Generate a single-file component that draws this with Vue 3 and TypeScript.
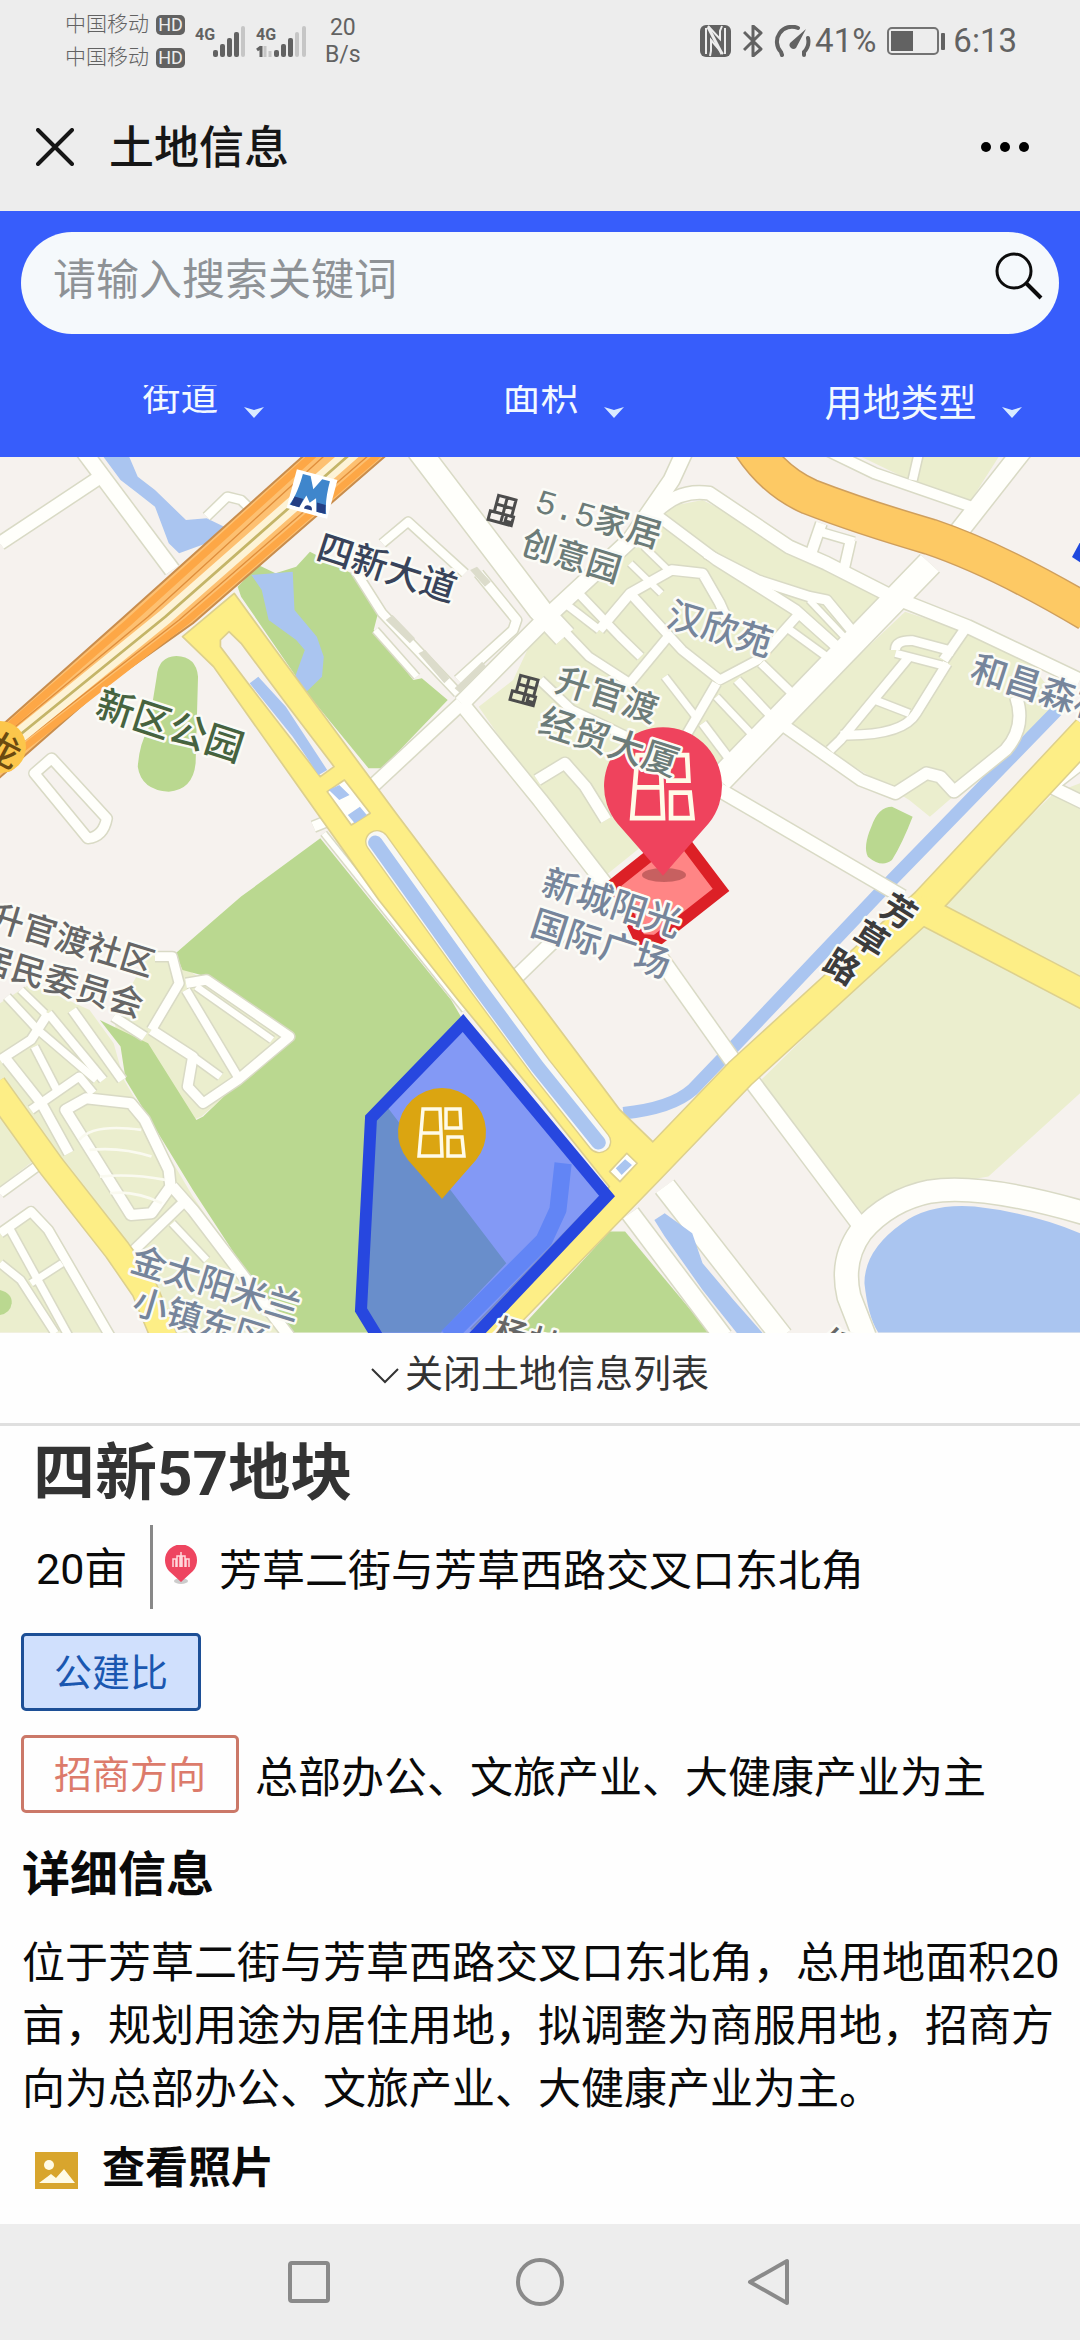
<script setup lang="ts">
import { ref } from 'vue'

interface Filter {
  id: string
  label: string
  clipped: boolean
}

interface Road {
  d: string
  w: number
}

interface MapLabel {
  text: string
  x: number
  y: number
  size: number
  angle: number
  kind: string
}

const keyword = ref('')
const listOpen = ref(true)

const carriers = ['中国移动', '中国移动']

const filters: Filter[] = [
  { id: 'street', label: '街道', clipped: true },
  { id: 'area', label: '面积', clipped: true },
  { id: 'usage', label: '用地类型', clipped: false },
]

const blocks: string[] = [
  'M1390 770L1490 690L1568 520L1690 430L1830 280L1940 170L2040 150L2300 290L2560 440L2480 540L1850 1200L1760 1275L1568 1020L1530 980Z',
  'M2628 485L2850 560L2990 640L3080 760L2700 1100L2640 1050L2400 900L2290 815Z',
  'M2500 20L2900 20L2820 150L2660 100Z',
  'M3136 1000L3060 1030L2200 1900L2520 2310L2640 2220L2870 2180L3136 1930Z',
  'M0 1660L90 1600L260 1680L330 1780L360 1890L560 2240L830 2648L470 2648L120 2130L0 1950Z',
  'M440 1500L500 1510L560 1570L850 1760L585 2000L560 2010L430 1790L340 1760L330 1700Z',
  'M0 2330L90 2290L320 2648L0 2648Z',
  'M0 2000L100 2130L0 2210Z',
]

const greens: string[] = [
  'M690 410L750 345L800 370L860 350L900 305L1020 370L1100 480L1085 540L1200 690L1225 685L1300 750L1110 955L1070 955L900 740L700 440Z',
  'M455 680Q460 620 512 618Q570 620 575 680L568 940Q560 1020 490 1025Q410 1020 400 950Q405 880 430 840Z',
  'M930 1165L1310 1650L1344 1710L1120 1965L1470 2440L1280 2648L830 2648L560 2220L365 1890L350 1790L290 1710L350 1740L430 1780L570 2010L590 2000L690 1900L850 1770L600 1580L530 1560L510 1510L700 1340Z',
  'M1770 2345L1815 2345L2060 2648L1500 2648Z',
  'M2590 1070L2650 1100Q2620 1180 2590 1230Q2560 1255 2520 1220Q2505 1190 2530 1130Q2550 1070 2590 1070Z',
  'M0 2520Q36 2530 34 2560Q30 2590 0 2595Z',
]

const waters: string[] = [
  'M300 20L375 20L400 80L450 120L540 210L600 205L660 235L600 280L520 310L490 280L450 170L400 130L350 90Z',
  'M730 375L850 365L855 480L920 560L940 620L935 680L880 735L850 700L885 600L860 570L780 510L760 420Z',
  'M3136 2350Q3000 2290 2830 2270Q2700 2260 2620 2320Q2510 2400 2510 2500Q2520 2600 2550 2648L3136 2648Z',
]

const streams: Road[] = [
  { d: 'M3070 780L2590 1290L2140 1780L2010 1920Q1950 1975 1810 1990', w: 38 },
  { d: 'M1635 2140L1620 2280L1580 2370L1300 2660', w: 50 },
]

const minorRoads: Road[] = [
  { d: 'M0 280L285 85', w: 38 },
  { d: 'M240 0L500 360', w: 44 },
  { d: 'M600 200L660 140L700 150L740 190', w: 24 },
  { d: 'M1215 0L1568 480L1640 560', w: 66 },
  { d: 'M1080 1010L1340 760', w: 38 },
  { d: 'M1340 760L1600 490L1830 270L1950 90L1990 0', w: 46 },
  { d: 'M1340 760L1568 1050L1770 1320', w: 42 },
  { d: 'M1030 360L1110 490L1330 730', w: 24 },
  { d: 'M1090 540L1210 680', w: 18 },
  { d: 'M1110 280L1185 215L1350 370', w: 24 },
  { d: 'M1390 370L1500 510L1490 540L1330 690', w: 26 },
  { d: 'M100 970L150 925L310 1105Q300 1160 255 1165Z', w: 28 },
  { d: 'M2970 0L2780 250', w: 54 },
  { d: 'M2090 990L2700 340', w: 72 },
  { d: 'M2090 1020L2620 1340', w: 40 },
  { d: 'M1900 190Q1970 115 2060 130L2290 290L2400 340L2590 440L2810 530L3136 690', w: 38 },
  { d: 'M2400 0L2540 70L2820 170', w: 30 },
  { d: 'M2670 0L2650 90', w: 24 },
  { d: 'M2385 220L2350 325', w: 30 },
  { d: 'M2470 270L2450 360', w: 28 },
  { d: 'M2380 245L2480 275', w: 24 },
  { d: 'M1900 190L2080 330L2310 480L2440 600', w: 30 },
  { d: 'M2050 310L2200 390L2350 440L2400 450L2480 550', w: 28 },
  { d: 'M2350 450L2460 570', w: 18 },
  { d: 'M1830 340L1920 430', w: 18 },
  { d: 'M1870 290L1950 370', w: 18 },
  { d: 'M1740 540L1830 430L1950 360L2040 370L2090 460L2120 530', w: 28 },
  { d: 'M1680 430L1800 560L1860 620', w: 24 },
  { d: 'M1590 490L1710 620L1830 700', w: 24 },
  { d: 'M1640 460L1740 540', w: 22 },
  { d: 'M1820 710L1940 560', w: 26 },
  { d: 'M1830 430L1980 600L2090 690L2200 630L2330 480', w: 26 },
  { d: 'M1990 860L2080 700', w: 26 },
  { d: 'M2040 820L2120 930', w: 24 },
  { d: 'M2080 740L2180 850', w: 20 },
  { d: 'M2140 690L2240 800', w: 24 },
  { d: 'M2210 640L2320 750', w: 24 },
  { d: 'M2280 530L2400 620', w: 22 },
  { d: 'M1930 680L2020 800', w: 20 },
  { d: 'M1568 690L1660 780L1820 860', w: 26 },
  { d: 'M1560 990L1640 940L1700 1010L1760 1110', w: 32 },
  { d: 'M2600 600Q2600 570 2650 572L2770 605', w: 26 },
  { d: 'M2640 620L2540 745L2440 870L2410 900', w: 26 },
  { d: 'M2600 610L2750 650', w: 22 },
  { d: 'M2750 640L2660 790Q2620 860 2440 855', w: 26 },
  { d: 'M2540 750L2640 790', w: 22 },
  { d: 'M2740 630L2800 540', w: 28 },
  { d: 'M2950 740Q2980 830 2920 900L2770 1025L2730 980L2690 970L2600 1030L2500 990L2280 830', w: 34 },
  { d: 'M3150 930L3050 1010L3150 1060', w: 36 },
  { d: 'M1900 1500L2140 1850', w: 46 },
  { d: 'M2180 1890L2500 2330', w: 44 },
  { d: 'M3150 2290Q2850 2200 2700 2225Q2580 2250 2500 2345Q2440 2430 2465 2540L2510 2660', w: 66 },
  { d: 'M1830 2290L2100 2660', w: 52 },
  { d: 'M1930 2210L2270 2660', w: 62 },
  { d: 'M1490 1590L1650 1430', w: 40 },
  { d: 'M910 1130L970 1105', w: 30 },
  { d: 'M940 1150L1350 1680', w: 16 },
  { d: 'M0 1830L90 1770L140 1690', w: 26 },
  { d: 'M20 1640L110 1740L280 1890', w: 22 },
  { d: 'M60 1620L130 1690', w: 20 },
  { d: 'M140 1690L300 1890', w: 24 },
  { d: 'M210 1680L355 1890', w: 26 },
  { d: 'M20 1830L120 1960L200 2110', w: 28 },
  { d: 'M100 1790L170 1930', w: 22 },
  { d: 'M90 1980L230 1880L270 1930', w: 24 },
  { d: 'M190 1980L250 1945L380 1960L420 2010L490 2160L495 2210L440 2290L380 2295Z', w: 30 },
  { d: 'M500 2210L560 2280L840 2660', w: 32 },
  { d: 'M390 2400L540 2250', w: 28 },
  { d: 'M500 2320L600 2430', w: 20 },
  { d: 'M450 1520L500 1520L520 1600L440 1740', w: 26 },
  { d: 'M330 1700L420 1760', w: 26 },
  { d: 'M540 1600L600 1590L840 1760L690 1890L590 1960L545 1910L560 1820L440 1740', w: 28 },
  { d: 'M540 1620L690 1880', w: 24 },
  { d: 'M570 1610L790 1770', w: 20 },
  { d: 'M560 1820L640 1880', w: 22 },
  { d: 'M0 2230L120 2140', w: 26 },
  { d: 'M0 2350L90 2285L140 2340L320 2660', w: 26 },
  { d: 'M30 2340L200 2660', w: 22 },
  { d: 'M90 2500L180 2440', w: 20 },
  { d: 'M0 2440L60 2490L160 2650', w: 22 },
]

const yellowRoads: Road[] = [
  { d: 'M-20 1905L150 2150L340 2400L420 2520L480 2670', w: 72 },
  { d: 'M3160 840L2690 1360L2150 1870L1880 2160L1400 2670', w: 88 },
  { d: 'M2660 1370L3160 1640', w: 80 },
]

const labels: MapLabel[] = [
  { text: '四新大道', x: 388, y: 108, size: 36, angle: 18, kind: 'navy' },
  { text: '新区公园', x: 171, y: 266, size: 38, angle: 18, kind: 'park' },
  { text: '5.5家居', x: 598, y: 64, size: 34, angle: 17, kind: 'office mono' },
  { text: '创意园', x: 572, y: 97, size: 34, angle: 17, kind: 'office' },
  { text: '汉欣苑', x: 721, y: 169, size: 36, angle: 17, kind: 'estate' },
  { text: '升官渡', x: 608, y: 235, size: 35, angle: 18, kind: 'office' },
  { text: '经贸大厦', x: 610, y: 282, size: 36, angle: 18, kind: 'office' },
  { text: '和昌森林', x: 1042, y: 229, size: 36, angle: 18, kind: 'estate' },
  { text: '新城阳光', x: 613, y: 443, size: 36, angle: 18, kind: 'estate' },
  { text: '国际广场', x: 602, y: 484, size: 36, angle: 18, kind: 'estate' },
  { text: '芳', x: 900, y: 453, size: 34, angle: 32, kind: 'road' },
  { text: '草', x: 872, y: 480, size: 34, angle: 32, kind: 'road' },
  { text: '路', x: 843, y: 508, size: 34, angle: 32, kind: 'road' },
  { text: '升官渡社区', x: 73, y: 481, size: 34, angle: 17, kind: 'grey' },
  { text: '居民委员会', x: 62, y: 522, size: 34, angle: 17, kind: 'grey' },
  { text: '金太阳米兰', x: 217, y: 824, size: 35, angle: 17, kind: 'estate' },
  { text: '小镇东区', x: 202, y: 861, size: 35, angle: 17, kind: 'estate' },
  { text: '杨林', x: 528, y: 880, size: 34, angle: 17, kind: 'grey' },
  { text: '红', x: 841, y: 886, size: 34, angle: 17, kind: 'grey' },
  { text: '龙', x: 4, y: 290, size: 36, angle: 28, kind: 'highway' },
]

const parcel = {
  name: '四新57地块',
  area: '20亩',
  address: '芳草二街与芳草西路交叉口东北角',
  direction: '总部办公、文旅产业、大健康产业为主',
  detail:
    '位于芳草二街与芳草西路交叉口东北角，总用地面积20亩，规划用途为居住用地，拟调整为商服用地，招商方向为总部办公、文旅产业、大健康产业为主。',
}
</script>

<template>
  <div class="page">
    <div class="status">
      <div class="carriers">
        <div v-for="(c, i) in carriers" :key="i" class="carrier">
          <span>{{ c }}</span>
          <b class="hd">HD</b>
        </div>
      </div>
      <svg class="signal" width="118" height="36" viewBox="0 0 118 36" aria-hidden="true">
        <g fill="#626262">
          <text x="0" y="17" class="gen">4G</text>
          <rect x="18" y="27" width="5" height="7" rx="2" />
          <rect x="25" y="21" width="5" height="13" rx="2" />
          <rect x="32" y="15" width="5" height="19" rx="2" />
          <rect x="39" y="9" width="5" height="25" rx="2" />
          <rect x="46" y="3" width="4" height="31" rx="2" fill="#c6c6c6" />
          <text x="61" y="17" class="gen">4G</text>
          <path d="M66 23v11M66 24l-4 3" stroke="#626262" stroke-width="3" fill="none" />
          <path d="M70 23v11M75 28v6" stroke="#c6c6c6" stroke-width="3" fill="none" />
          <rect x="79" y="27" width="5" height="7" rx="2" />
          <rect x="86" y="21" width="5" height="13" rx="2" />
          <rect x="93" y="15" width="5" height="19" rx="2" />
          <rect x="100" y="9" width="4" height="25" rx="2" fill="#c6c6c6" />
          <rect x="107" y="3" width="4" height="31" rx="2" fill="#c6c6c6" />
        </g>
      </svg>
      <div class="speed"><span>20</span><span>B/s</span></div>
      <div class="status-right">
        <svg width="32" height="32" viewBox="0 0 32 32" aria-hidden="true">
          <rect width="31" height="32" rx="6" fill="#626262" />
          <path d="M6 3v26M25 3v26" stroke="#ededed" stroke-width="2" />
          <path d="M8 1l12 13V6l2-5M10 31l1-5V15l12 14" fill="none" stroke="#ededed" stroke-width="2" />
          <path d="M8 2l14 27" stroke="#ededed" stroke-width="3" />
        </svg>
        <svg width="20" height="32" viewBox="0 0 20 32" aria-hidden="true">
          <path d="M1 7l17 17-8 7V1l8 7L1 25" fill="none" stroke="#626262" stroke-width="3" stroke-linejoin="round" />
        </svg>
        <svg class="gauge" width="38" height="32" viewBox="0 0 38 32" aria-hidden="true">
          <g fill="none" stroke="#626262" stroke-width="4" stroke-linecap="round">
            <path d="M8 30L7 27A15 15 0 0 1 24 3" />
            <path d="M34 13A15 15 0 0 1 30 27V30" />
          </g>
          <path d="M32 4L22 23a4 4 0 0 1-6-5z" fill="#626262" />
        </svg>
        <span class="num">41%</span>
        <svg class="battery" width="60" height="28" viewBox="0 0 60 28" aria-hidden="true">
          <rect x="1" y="1" width="50" height="26" rx="4" fill="none" stroke="#737373" stroke-width="2" />
          <rect x="4" y="4" width="22" height="20" fill="#626262" />
          <rect x="54" y="6" width="4" height="17" rx="1" fill="#626262" />
        </svg>
        <span class="num">6:13</span>
      </div>
    </div>

    <header class="titlebar">
      <button type="button" class="icon-btn" aria-label="关闭">
        <svg width="38" height="38" viewBox="0 0 38 38">
          <path d="M2 2l34 34M36 2L2 36" stroke="#161616" stroke-width="4" stroke-linecap="round" />
        </svg>
      </button>
      <h1>土地信息</h1>
      <button type="button" class="icon-btn more" aria-label="更多">
        <svg width="50" height="12" viewBox="0 0 50 12">
          <circle cx="6" cy="6" r="5" />
          <circle cx="25" cy="6" r="5" />
          <circle cx="44" cy="6" r="5" />
        </svg>
      </button>
    </header>

    <section class="search-area">
      <form class="search" role="search" @submit.prevent>
        <input v-model="keyword" type="text" placeholder="请输入搜索关键词" aria-label="搜索关键词" />
        <button type="submit" class="icon-btn find" aria-label="搜索">
          <svg width="48" height="48" viewBox="0 0 48 48" fill="none" stroke="#0c0c0c" stroke-width="3">
            <circle cx="19" cy="19" r="17" />
            <path d="M31 31l15 15" stroke-width="4" />
          </svg>
        </button>
      </form>
      <div class="filters">
        <div v-for="f in filters" :key="f.id" class="filter">
          <div class="select-box" :class="{ clipped: f.clipped }">
            <select :id="f.id" :aria-label="f.label">
              <option>{{ f.label }}</option>
            </select>
          </div>
          <svg class="arrow" width="20" height="11" viewBox="0 0 20 11" aria-hidden="true">
            <path d="M0 0l10 3L20 0 10 11z" fill="#d9ebff" />
          </svg>
        </div>
      </div>
    </section>

    <svg class="map" viewBox="0 0 1080 876" role="img" aria-label="地图">
      <defs>
        <g id="pin-shape">
          <path d="M0 67Q-5 61-34 28A44 44 0 1 1 34 28Q5 61 0 67Z" />
          <g fill="none" stroke="#fffbe8" stroke-width="3.5">
            <path d="M-19-23H-2L0 24H-23ZM-21 1H-1" />
            <path d="M4-23H18L19-4H4ZM6 5H20L22 24H6Z" />
          </g>
        </g>
        <g id="tower">
          <path d="M-8-13H10V4H12V13H-12V4H-8ZM-8-4H10M-8 4H10M1-13V13M5 4V10H12" />
        </g>
      </defs>

      <rect width="1080" height="876" fill="#f6f2ee" />
      <g transform="translate(0 -7) scale(.3444 .3333)" stroke-linejoin="round">
        <path v-for="(d, i) in blocks" :key="'b' + i" :d="d" fill="#ebeece" />
        <path v-for="(d, i) in greens" :key="'g' + i" :d="d" fill="#bad890" />
        <path v-for="(d, i) in waters" :key="'w' + i" :d="d" fill="#aac5f0" />
        <path v-for="(s, i) in streams" :key="'s' + i" :d="s.d" :stroke-width="s.w" fill="none" stroke="#aac5f0" />

        <g fill="none" stroke="#d9dac5">
          <path v-for="(r, i) in minorRoads" :key="'mc' + i" :d="r.d" :stroke-width="r.w + 9" />
        </g>
        <g fill="none" stroke="#fffffb">
          <path v-for="(r, i) in minorRoads" :key="'m' + i" :d="r.d" :stroke-width="r.w" />
        </g>
        <g fill="none" stroke="#fafaf0" stroke-width="8">
          <path d="M230 2070Q270 2020 410 2040M260 2100Q350 2090 440 2120M290 2180Q380 2170 480 2190M320 2230Q390 2220 470 2260" />
        </g>
        <path d="M1900 2310L1930 2290L2010 2350L2040 2440L2130 2550L2215 2650L2140 2650L2040 2520L1930 2360Z" fill="#aac5f0" />
        <path d="M1120 510L1140 495L1205 565L1190 580ZM1215 610L1235 600L1305 685L1290 700ZM1365 360L1385 350L1425 395L1408 410ZM1320 715L1400 635L1412 650L1335 728Z" fill="#dcdccb" />

        <g fill="none" stroke="#ddd08d">
          <path v-for="(r, i) in yellowRoads" :key="'yc' + i" :d="r.d" :stroke-width="r.w + 9" />
        </g>
        <path
          d="M530 560L680 430L800 600L1150 1090L1340 1350L1568 1660L1800 1980L1910 2090L1800 2250L1568 1950L1330 1650L1100 1350L880 1030L620 650Z"
          fill="#fdee86" stroke="#ddd08d" stroke-width="5"
        />
        <g fill="none" stroke="#fdee86">
          <path v-for="(r, i) in yellowRoads" :key="'y' + i" :d="r.d" :stroke-width="r.w" />
        </g>
        <g stroke="#ddcf8e" stroke-width="5">
          <path d="M640 570L665 545L700 580L830 760L970 950L930 980L720 700L640 590Z" fill="#f6f2ee" />
          <path d="M950 1025L1000 990L1075 1090L1020 1125Z" fill="#fffffb" />
          <path d="M1770 2165L1820 2110L1850 2140L1800 2195Z" fill="#fffffb" />
        </g>
        <path d="M1095 1175L1390 1600L1568 1850L1740 2075" fill="none" stroke="#ddcf8e" stroke-width="70" stroke-linecap="round" />
        <path d="M1095 1175L1390 1600L1568 1850L1740 2075" fill="none" stroke="#f8f8f4" stroke-width="62" stroke-linecap="round" />
        <path d="M1090 1178L1385 1605L1560 1850L1738 2078" fill="none" stroke="#aac5f0" stroke-width="42" stroke-linecap="round" />
        <path d="M725 700L750 680L830 770L950 960L925 975L850 860ZM955 1020L985 1005L1015 1035L985 1050ZM1010 1095L1045 1070L1065 1095L1030 1120ZM1788 2155L1815 2128L1835 2145L1805 2175Z" fill="#aac5f0" />

        <path d="M2170 -30Q2240 90 2350 140Q2500 200 2700 260Q2900 330 3160 490" fill="none" stroke="#cf9f5d" stroke-width="111" />
        <path d="M2170 -30Q2240 90 2350 140Q2500 200 2700 260Q2900 330 3160 490" fill="none" stroke="#fdc964" stroke-width="102" />

        <path d="M900 0L350 510L-20 850L-20 1000L300 710L560 520L1150 -10Z" fill="#fdc071" stroke="#c98d4c" stroke-width="6" />
        <g fill="none">
          <path d="M925 0L370 520L-20 870" stroke="#fda746" stroke-width="22" />
          <path d="M1115 0L540 515L-20 965" stroke="#fda746" stroke-width="20" />
          <path d="M960 0L430 500L-20 885" stroke="#e08e3b" stroke-width="4" />
          <path d="M1088 0L520 510L-20 945" stroke="#e08e3b" stroke-width="4" />
          <path d="M1030 0L480 500L-20 920" stroke="#fdf3d6" stroke-width="46" />
          <path d="M1030 0L480 500L-20 920" stroke="#c4b568" stroke-width="8" />
        </g>
      </g>

      <circle cx="0" cy="290" r="26" fill="#fcc64b" />

      <g transform="translate(312 37) rotate(15)">
        <rect x="-21" y="-20" width="42" height="40" fill="#fff" />
        <path d="M-19 16C-15 6-14-6-14-17H-6L0-5L6-17H14C14-6 15 6 19 16H9L5 3L0 9L-5 3L-9 16Z" fill="#3f86cc" />
        <path d="M-18 16L-16 7H-7L-9 16ZM18 16L16 7H7L9 16ZM-4 16a4 4 0 0 1 8 0z" fill="#243f84" />
      </g>

      <polygon points="678,376 721,433 656,484 640,483 614,427" fill="#ff8585" stroke="#dc2026" stroke-width="12" />
      <polygon
        points="463,566 607,739 470,884 380,884 361,853 371,661"
        fill="#2954fa" fill-opacity=".56" stroke="#2747df" stroke-width="12"
      />
      <path d="M1084 78L1072 100L1084 108Z" fill="#1f48dd" />

      <ellipse cx="664" cy="418" rx="22" ry="7" fill="#8f3b3b" opacity=".5" />
      <use href="#pin-shape" transform="translate(663 329) scale(1.34)" fill="#ef435d" />
      <use href="#pin-shape" transform="translate(442 675)" fill="#dba511" />

      <g fill="none" stroke="#4c4c4c" stroke-width="3">
        <use href="#tower" transform="translate(503 53) rotate(15)" />
        <use href="#tower" transform="translate(525 233) rotate(15)" />
      </g>
      <text
        v-for="l in labels" :key="l.text"
        :transform="`translate(${l.x} ${l.y}) rotate(${l.angle})`"
        :font-size="l.size" class="map-label" :class="l.kind"
      >{{ l.text }}</text>
    </svg>

    <main class="sheet">
      <button type="button" class="toggle" :aria-expanded="listOpen" @click="listOpen = !listOpen">
        <svg width="28" height="16" viewBox="0 0 28 16" aria-hidden="true">
          <path d="M1 1l13 13L27 1" fill="none" stroke="#333" stroke-width="2" />
        </svg>
        <span>{{ listOpen ? '关闭' : '打开' }}土地信息列表</span>
      </button>

      <article v-if="listOpen" class="parcel">
        <h2>{{ parcel.name }}</h2>
        <div class="place">
          <span class="size">{{ parcel.area }}</span>
          <svg width="34" height="40" viewBox="0 0 34 40" aria-hidden="true">
            <ellipse cx="17" cy="36" rx="7" ry="3" fill="#ccc" />
            <path d="M17 37L5 26A16 16 0 1 1 29 26Z" fill="#ee4560" />
            <path d="M9 22V14h3v8M13 22V11h3v11M17 22V7M18 22V11h3v11M22 22V14h3v8" fill="none" stroke="#ffd9dc" stroke-width="1.5" />
          </svg>
          <span class="address">{{ parcel.address }}</span>
        </div>
        <div class="tag-row"><span class="tag blue">公建比</span></div>
        <div class="tag-row">
          <span class="tag coral">招商方向</span>
          <span>{{ parcel.direction }}</span>
        </div>
        <h3>详细信息</h3>
        <p>{{ parcel.detail }}</p>
        <a href="#photos" class="photos">
          <svg width="43" height="37" viewBox="0 0 43 37" aria-hidden="true">
            <rect width="43" height="37" fill="#d8a52d" />
            <circle cx="14" cy="13" r="5" fill="#fffbe6" />
            <path d="M4 31l12-9 5 4 8-9 11 14z" fill="#fffbe6" />
          </svg>
          <span>查看照片</span>
        </a>
      </article>
    </main>

    <nav class="navbar" aria-label="系统导航">
      <button type="button" class="icon-btn" aria-label="最近任务">
        <svg width="48" height="48" viewBox="0 0 48 48"><rect x="5" y="5" width="38" height="38" rx="2" /></svg>
      </button>
      <button type="button" class="icon-btn" aria-label="主屏幕">
        <svg width="48" height="48" viewBox="0 0 48 48"><circle cx="24" cy="24" r="22" /></svg>
      </button>
      <button type="button" class="icon-btn" aria-label="返回">
        <svg width="48" height="48" viewBox="0 0 48 48"><path d="M40 3v42L3 24z" stroke-linejoin="round" /></svg>
      </button>
    </nav>
  </div>
</template>

<style>
body {
  margin: 0;
  background: #fff;
}
</style>

<style scoped>
.page {
  display: flex;
  flex-direction: column;
  min-height: 100vh;
  overflow: hidden;
  background: #fefefe;
  color: #0a0a0a;
  font-family: Roboto, "Noto Sans CJK SC", sans-serif;
  font-size: 43px;
}

.page *,
.page {
  box-sizing: border-box;
}

svg {
  display: block;
  flex: none;
}

.icon-btn {
  display: block;
  padding: 0;
  border: 0;
  background: none;
}

.status {
  display: flex;
  align-items: center;
  height: 82px;
  padding: 0 63px 0 65px;
  background: #ededed;
  color: #626262;
}

.carrier {
  display: flex;
  align-items: center;
  gap: 7px;
  height: 33px;
  font-size: 21px;
  font-weight: 300;
  line-height: 33px;
}

.hd {
  width: 29px;
  height: 20px;
  border-radius: 5px;
  background: #626262;
  color: #ededed;
  font-size: 18px;
  line-height: 20px;
  text-align: center;
}

.signal {
  margin-left: 10px;
}

.gen {
  font-size: 16px;
  font-weight: 700;
}

.speed {
  display: flex;
  flex-direction: column;
  align-items: center;
  margin-left: 12px;
  font-size: 23px;
  line-height: 27px;
}

.status-right {
  display: flex;
  align-items: center;
  gap: 11px;
  margin-left: auto;
}

.gauge {
  margin-right: -8px;
}

.battery {
  margin-right: -5px;
}

.num {
  font-size: 33px;
  line-height: 40px;
}

.titlebar {
  display: flex;
  align-items: center;
  height: 129px;
  padding: 0 50px 0 36px;
  background: #ededed;
}

.titlebar h1 {
  margin: 4px 0 0 35px;
  color: #161616;
  font-size: 45px;
  font-weight: 500;
  line-height: 64px;
}

.more {
  margin-left: auto;
}

.search-area {
  padding: 21px 21px 0;
  background: #375dfb;
}

.search {
  display: flex;
  align-items: center;
  height: 102px;
  padding: 0 16px 6px 32px;
  border-radius: 51px;
  background: #f5f9fc;
}

.search input {
  flex: 1;
  min-width: 0;
  padding: 0;
  border: 0;
  outline: 0;
  background: none;
  font: inherit;
  font-size: 43px;
}

.search input::placeholder {
  color: #8e9296;
  opacity: 1;
}

.find {
  margin-bottom: 8px;
}

.filters {
  display: grid;
  grid-template-columns: repeat(3, 1fr);
  height: 123px;
  margin: 0 -21px;
  padding: 43px 0 0;
}

.filter {
  display: flex;
  align-items: flex-start;
  justify-content: center;
  gap: 24px;
  padding-left: 46px;
}

.select-box {
  display: flex;
  align-items: center;
  height: 52px;
}

.select-box.clipped {
  align-items: flex-end;
  height: 38px;
  margin-top: 8px;
  overflow: hidden;
}

.filter select {
  height: 52px;
  padding: 0;
  border: 0;
  outline: 0;
  appearance: none;
  background: none;
  color: #f2f9ff;
  font: inherit;
  font-size: 38px;
  line-height: 52px;
}

.arrow {
  margin-top: 30px;
}

.map {
  width: 100%;
  height: auto;
}

.map-label {
  font-family: "Noto Sans CJK SC", sans-serif;
  font-weight: 500;
  text-anchor: middle;
  dominant-baseline: central;
  paint-order: stroke;
  stroke: #fbfbf6;
  stroke-width: 5px;
  stroke-linejoin: round;
}

.mono {
  font-family: "Liberation Mono", "Noto Sans CJK SC", monospace;
}

.navy {
  fill: #38435a;
}

.park {
  fill: #46633f;
}

.office {
  fill: #6c7c79;
}

.estate {
  fill: #76859b;
}

.grey {
  fill: #666;
}

.road {
  fill: #3c3c3c;
  font-weight: 700;
}

.highway {
  fill: #6b4a10;
  stroke: #fcc64b;
}

.sheet {
  flex: 1;
}

.toggle {
  display: flex;
  align-items: center;
  justify-content: center;
  gap: 6px;
  width: 100%;
  height: 93px;
  padding: 0;
  border: 0;
  border-bottom: 3px solid #dfdfdf;
  background: none;
  color: #333;
  font: inherit;
  font-size: 38px;
}

.toggle span {
  height: 60px;
  line-height: 52px;
}

.toggle svg {
  margin-bottom: 4px;
}

.parcel {
  padding: 0 20px 0 22px;
}

.parcel h2 {
  margin: 0 0 4px 11px;
  color: #333;
  font-size: 62px;
  font-weight: 700;
  line-height: 95px;
}

.place {
  display: flex;
  align-items: center;
  height: 84px;
}

.size {
  width: 131px;
  padding: 4px 0 0 14px;
  border-right: 3px solid #888;
  line-height: 80px;
}

.place svg {
  margin: 0 21px 4px 11px;
}

.tag-row {
  display: flex;
  align-items: center;
  gap: 16px;
  margin: 24px 0 0 -1px;
}

.tag {
  height: 78px;
  padding: 0 30px;
  border: 3px solid;
  border-radius: 5px;
  font-size: 38px;
  line-height: 75px;
}

.blue {
  border-color: #1d4f96;
  background: #d0e0fd;
  color: #1a57b0;
}

.coral {
  border-color: #cb7868;
  color: #dc7b6b;
}

.parcel h3 {
  margin: 32px 0 27px;
  font-size: 48px;
  line-height: 60px;
}

.parcel p {
  margin: 0;
  line-height: 63px;
}

.photos {
  display: flex;
  align-items: center;
  gap: 24px;
  height: 102px;
  padding: 0 0 4px 13px;
  color: inherit;
  font-weight: 700;
  line-height: 60px;
  text-decoration: none;
}

.photos span {
  margin-bottom: 4px;
}

.navbar {
  display: flex;
  align-items: center;
  justify-content: center;
  gap: 183px;
  height: 116px;
  background: #ededed;
}

.navbar svg {
  fill: none;
  stroke: #8a8a8a;
  stroke-width: 4px;
}
</style>
